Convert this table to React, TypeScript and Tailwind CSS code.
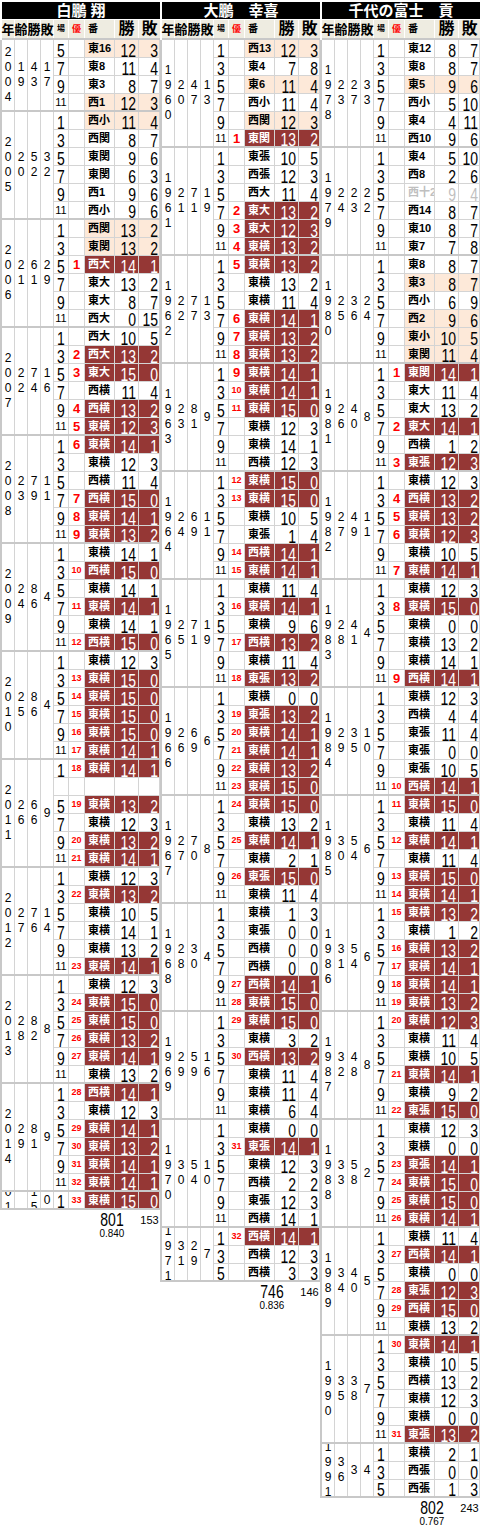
import React from "react";

type Year = [string, string, string, string, string[]];

// 行の書式: 場|優勝回数|番付|勝|敗|種別 (d=優勝, p=好成績, g=十両)
const hakuho: Year[] = [
  ["2004", "19", "43", "17", ["5||東16|12|3|p", "7||東8|11|4|", "9||東3|8|7|", "11||西1|12|3|p"]],
  ["2005", "20", "52", "32", ["1||西小|11|4|p", "3||西関|8|7|", "5||東関|9|6|", "7||東関|6|3|", "9||西1|9|6|", "11||西小|9|6|"]],
  ["2006", "21", "61", "29", ["1||西関|13|2|p", "3||東関|13|2|p", "5|1|西大|14|1|d", "7||東大|13|2|", "9||東大|8|7|", "11||西大|0|15|"]],
  ["2007", "22", "74", "16", ["1||西大|10|5|", "3|2|西大|13|2|d", "5|3|東大|15|0|d", "7||西横|11|4|", "9|4|西横|13|2|d", "11|5|東横|12|3|d"]],
  ["2008", "23", "79", "11", ["1|6|東横|14|1|d", "3||東横|12|3|", "5||西横|11|4|", "7|7|西横|15|0|d", "9|8|東横|14|1|d", "11|9|東横|13|2|d"]],
  ["2009", "24", "86", "4", ["1||東横|14|1|", "3|10|西横|15|0|d", "5||東横|14|1|", "7|11|東横|14|1|d", "9||東横|14|1|", "11|12|西横|15|0|d"]],
  ["2010", "25", "86", "4", ["1||東横|12|3|", "3|13|東横|15|0|d", "5|14|東横|15|0|d", "7|15|東横|15|0|d", "9|16|東横|15|0|d", "11|17|東横|14|1|d"]],
  ["2011", "26", "66", "9", ["1|18|東横|14|1|d", "|||||", "5|19|東横|13|2|d", "7||東横|12|3|", "9|20|東横|13|2|d", "11|21|東横|14|1|d"]],
  ["2012", "27", "76", "14", ["1||東横|12|3|", "3|22|東横|13|2|d", "5||東横|10|5|", "7||東横|14|1|", "9||東横|13|2|", "11|23|東横|14|1|d"]],
  ["2013", "28", "82", "8", ["1||東横|12|3|", "3|24|東横|15|0|d", "5|25|東横|15|0|d", "7|26|東横|13|2|d", "9|27|東横|14|1|d", "11||東横|13|2|"]],
  ["2014", "29", "81", "9", ["1|28|西横|14|1|d", "3||東横|12|3|", "5|29|東横|14|1|d", "7|30|東横|13|2|d", "9|31|東横|14|1|d", "11|32|東横|14|1|d"]],
  ["2015", "", "15", "0", ["1|33|東横|15|0|d"]],
];

const taiho: Year[] = [
  ["1960", "20", "47", "13", ["1||西13|12|3|p", "3||東4|7|8|", "5||東6|11|4|p", "7||西小|11|4|", "9||西関|12|3|p", "11|1|東関|13|2|d"]],
  ["1961", "21", "71", "19", ["1||東張|10|5|", "3||西張|12|3|", "5||西大|11|4|", "7|2|東大|13|2|d", "9|3|東大|12|3|d", "11|4|東横|13|2|d"]],
  ["1962", "22", "77", "13", ["1|5|東横|13|2|d", "3||東横|13|2|", "5||東横|11|4|", "7|6|東横|14|1|d", "9|7|東横|13|2|d", "11|8|東横|13|2|d"]],
  ["1963", "23", "81", "9", ["1|9|東横|14|1|d", "3|10|東横|14|1|d", "5|11|東横|15|0|d", "7||東横|12|3|", "9||東横|14|1|", "11||西横|12|3|"]],
  ["1964", "24", "69", "11", ["1|12|東横|15|0|d", "3|13|東横|15|0|d", "5||東横|10|5|", "7||東張|1|4|", "9|14|西横|14|1|d", "11|15|東横|14|1|d"]],
  ["1965", "25", "71", "19", ["1||東横|11|4|", "3|16|東横|14|1|d", "5||東横|9|6|", "7|17|西横|13|2|d", "9||東横|11|4|", "11|18|東張|13|2|d"]],
  ["1966", "26", "69", "6", ["1||東横|0|0|", "3|19|東張|13|2|d", "5|20|東横|14|1|d", "7|21|東横|14|1|d", "9|22|東横|13|2|d", "11|23|東横|15|0|d"]],
  ["1967", "27", "70", "8", ["1|24|東横|15|0|d", "3||東横|13|2|", "5|25|東横|14|1|d", "7||東横|2|1|", "9|26|東張|15|0|d", "11||東横|11|4|"]],
  ["1968", "28", "30", "4", ["1||東横|1|3|", "3||東張|0|0|", "5||西横|0|0|", "7||西横|0|0|", "9|27|西横|14|1|d", "11|28|東横|15|0|d"]],
  ["1969", "29", "59", "16", ["1|29|東横|15|0|d", "3||東横|3|2|", "5|30|西横|13|2|d", "7||東横|11|4|", "9||東横|11|4|", "11||東横|6|4|"]],
  ["1970", "30", "54", "10", ["1||東横|0|0|", "3|31|東張|14|1|d", "5||東横|12|3|", "7||西横|2|2|", "9||東張|12|3|", "11||西横|14|1|"]],
  ["1971", "31", "29", "7", ["1|32|西横|14|1|d", "3||西横|12|3|", "5||西横|3|3|"]],
];

const chiyo: Year[] = [
  ["1978", "23", "27", "33", ["1||東12|8|7|", "3||東8|8|7|", "5||東5|9|6|p", "7||西小|5|10|", "9||東4|4|11|", "11||西10|9|6|"]],
  ["1979", "24", "23", "22", ["1||東4|5|10|", "3||西8|2|6|", "5||西十2|9|4|g", "7||西14|8|7|", "9||東10|8|7|", "11||東7|7|8|"]],
  ["1980", "25", "36", "24", ["1||東8|8|7|", "3||東3|8|7|p", "5||西小|6|9|", "7||西2|9|6|p", "9||東小|10|5|p", "11||東関|11|4|p"]],
  ["1981", "26", "40", "8", ["1|1|東関|14|1|d", "3||東大|11|4|", "5||東大|13|2|", "7|2|東大|14|1|d", "9||西横|1|2|", "11|3|東張|12|3|d"]],
  ["1982", "27", "49", "11", ["1||東横|12|3|", "3|4|西横|13|2|d", "5|5|東横|13|2|d", "7|6|東横|12|3|d", "9||東横|10|5|", "11|7|東横|14|1|d"]],
  ["1983", "28", "41", "4", ["1||東横|12|3|", "3|8|東横|15|0|d", "5||東横|0|0|", "7||東横|13|2|", "9||東横|14|1|", "11|9|西横|14|1|d"]],
  ["1984", "29", "35", "10", ["1||東横|12|3|", "3||西横|4|4|", "5||東張|11|4|", "7||東張|0|0|", "9||東張|10|5|", "11|10|西横|14|1|d"]],
  ["1985", "30", "54", "6", ["1|11|東横|15|0|d", "3||東横|11|4|", "5|12|東横|14|1|d", "7||東横|11|4|", "9|13|東横|15|0|d", "11|14|東横|14|1|d"]],
  ["1986", "31", "54", "6", ["1|15|東横|13|2|d", "3||東横|1|2|", "5|16|東横|13|2|d", "7|17|東横|14|1|d", "9|18|東横|14|1|d", "11|19|東横|13|2|d"]],
  ["1987", "32", "48", "8", ["1|20|東横|12|3|d", "3||東横|11|4|", "5||東横|10|5|", "7|21|東横|14|1|d", "9||東横|9|2|", "11|22|東張|15|0|d"]],
  ["1988", "33", "58", "2", ["1||東横|12|3|", "3||東横|0|0|", "5|23|東張|14|1|d", "7|24|東横|15|0|d", "9|25|東横|15|0|d", "11|26|東横|14|1|d"]],
  ["1989", "34", "40", "5", ["1||東横|11|4|", "3|27|西横|14|1|d", "5||東横|0|0|", "7|28|東張|12|3|d", "9|29|西横|15|0|d", "11||東横|13|2|"]],
  ["1990", "35", "38", "7", ["1|30|東横|14|1|d", "3||東横|10|5|", "5||西横|13|2|", "7||東横|12|3|", "9||東横|0|0|", "11|31|東張|13|2|d"]],
  ["1991", "36", "3", "4", ["1||東横|2|1|", "3||西張|0|0|", "5||西張|1|3|"]],
];

// 場所数ごとのブロックの高さ (1行18px)
const blockH: Record<number, string> = {
  1: "h-[18px]",
  3: "h-[54px]",
  4: "h-[72px]",
  6: "h-[108px]",
};

function Big({ v, right }: { v: string; right?: boolean }) {
  return (
    <span
      className={`inline-block translate-y-[1.5px] scale-y-[1.35] text-[14px] leading-[12px] ${right ? "origin-right" : "origin-center"}`}
    >
      {v}
    </span>
  );
}

function Stack({ v, first }: { v: string; first?: boolean }) {
  return (
    <div
      className={`flex shrink-0 flex-col items-center justify-center overflow-hidden border-r border-[#d4d4d4] text-[12px] leading-[15px] ${
        first ? "w-[15px] border-l-2 border-l-[#c8c8c8]" : "w-[13px]"
      }`}
    >
      {v.split("").map((c, i) => (
        <span key={i}>{c}</span>
      ))}
    </div>
  );
}

function Row({ s, last }: { s: string; last: boolean }) {
  const [b, u, r, w, l, t] = s.split("|");
  const tone =
    t === "d" ? "bg-[#953735] text-white" : t === "p" ? "bg-[#fde9d9]" : t === "g" ? "text-[#bfbfbf]" : "";
  return (
    <div className={`flex ${last ? "h-[16px]" : "h-[18px] border-b border-[#d4d4d4]"}`}>
      <div className="flex w-[15px] items-center justify-center border-r border-[#d4d4d4]">
        {b === "11" ? <span className="text-[11px] leading-none">11</span> : b ? <Big v={b} /> : null}
      </div>
      <div className="flex w-[16px] items-center justify-center border-r border-[#d4d4d4] font-bold leading-none text-[#ff0000]">
        {u && <span className={u.length > 1 ? "text-[9px]" : "text-[13px]"}>{u}</span>}
      </div>
      <div
        className={`flex w-[30px] items-center overflow-hidden whitespace-nowrap border-r border-[#d4d4d4] pl-[3px] text-[11px] font-semibold leading-none ${tone}`}
      >
        {r}
      </div>
      <div className={`flex w-[24px] items-center justify-end border-r border-[#d4d4d4] pr-[2px] ${tone}`}>
        {w && <Big v={w} right />}
      </div>
      <div className={`flex w-[21px] items-center justify-end border-r border-[#d4d4d4] pr-px ${tone}`}>
        {l && <Big v={l} right />}
      </div>
    </div>
  );
}

function Table({ name, years, wins, losses, rate }: { name: string; years: Year[]; wins: string; losses: string; rate: string }) {
  return (
    <div className="flex w-[160px] shrink-0 flex-col">
      <div className="ml-[2px] mt-[2px] flex h-[17px] items-center justify-center bg-black text-[15px] font-bold leading-none text-white">
        {name}
      </div>
      <div className="ml-[2px] mt-px flex h-[20px] border-b-2 border-[#c8c8c8] bg-[#eeece1] font-bold leading-none">
        <div className="flex w-[13px] items-center justify-center border-r border-white text-[13px]">年</div>
        <div className="flex w-[13px] items-center justify-center border-r border-white text-[13px]">齢</div>
        <div className="flex w-[13px] items-center justify-center border-r border-white text-[13px]">勝</div>
        <div className="flex w-[13px] items-center justify-center border-r border-white text-[13px]">敗</div>
        <div className="flex w-[15px] items-center justify-center border-r border-white text-[8px]">場</div>
        <div className="flex w-[16px] items-center justify-center border-r border-white text-[9px] text-[#ff0000]">優</div>
        <div className="flex w-[30px] items-center border-r border-white pl-[3px] text-[10px]">番</div>
        <div className="flex w-[24px] items-center justify-center border-r border-white text-[16px]">勝</div>
        <div className="flex w-[21px] items-center justify-center text-[16px]">敗</div>
      </div>
      {years.map(([y, a, w, l, rows]) => (
        <div key={y} className={`flex overflow-hidden border-b-2 border-[#c8c8c8] ${blockH[rows.length]}`}>
          <Stack v={y} first />
          <Stack v={a} />
          <Stack v={w} />
          <Stack v={l} />
          <div className="flex flex-col">
            {rows.map((s, i) => (
              <Row key={i} s={s} last={i === rows.length - 1} />
            ))}
          </div>
        </div>
      ))}
      <div className="flex">
        <div className="w-[85px] shrink-0" />
        <div className="flex w-[54px] flex-col items-center">
          <span className="inline-block h-[17px] translate-y-[3px] scale-y-[1.3] text-[14px] leading-[14px]">{wins}</span>
          <span className="inline-block scale-x-[0.9] text-[11px] leading-[12px]">{rate}</span>
        </div>
        <div className="flex w-[21px] justify-center pt-[5px] text-[11px] leading-none">{losses}</div>
      </div>
    </div>
  );
}

export default function App() {
  return (
    <div className="flex w-[480px] items-start bg-white font-['Liberation_Sans','Noto_Sans_CJK_JP',sans-serif] text-black">
      <Table name="白鵬 翔" years={hakuho} wins="801" losses="153" rate="0.840" />
      <Table name="大鵬　幸喜" years={taiho} wins="746" losses="146" rate="0.836" />
      <Table name="千代の富士　貢" years={chiyo} wins="802" losses="243" rate="0.767" />
    </div>
  );
}
